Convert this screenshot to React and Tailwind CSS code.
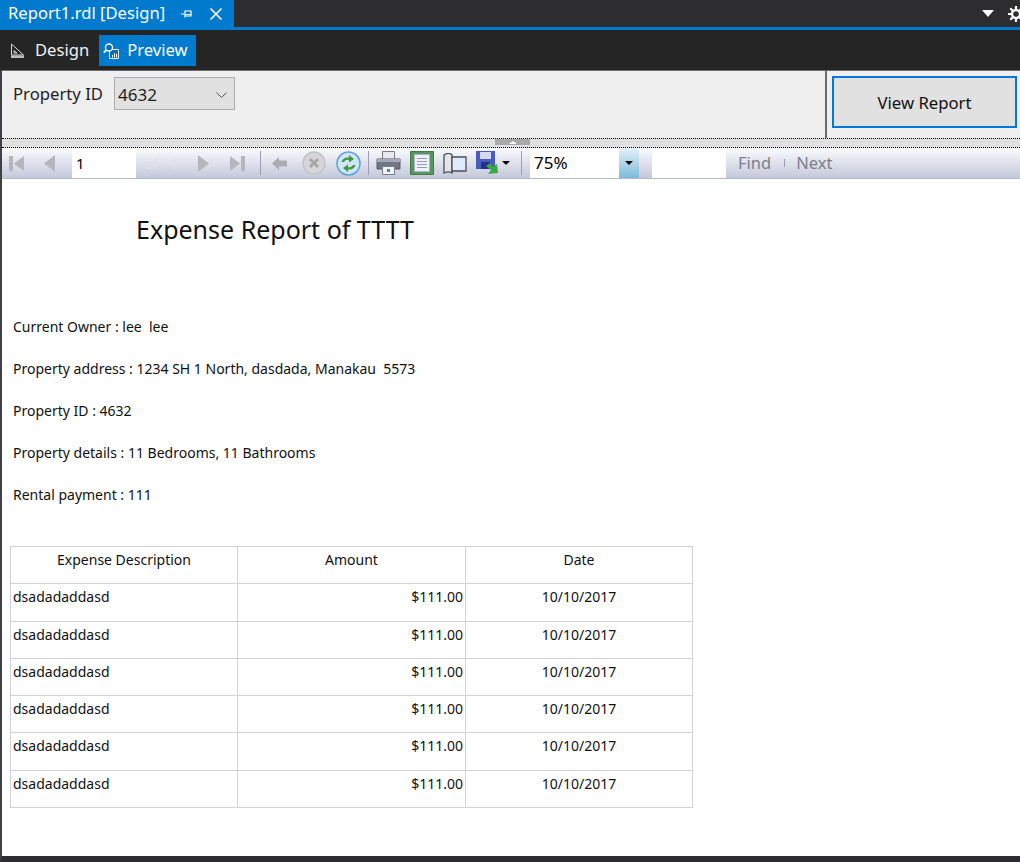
const font = "[font-family:'Noto_Sans',sans-serif]"

const rows = Array.from({ length: 6 }, () => ({
  description: 'dsadadaddasd',
  amount: '$111.00',
  date: '10/10/2017',
}))

const details = [
  'Current Owner : lee  lee',
  'Property address : 1234 SH 1 North, dasdada, Manakau  5573',
  'Property ID : 4632',
  'Property details : 11 Bedrooms, 11 Bathrooms',
  'Rental payment : 111',
]

const PinIcon = () => (
  <svg width="12" height="10" viewBox="0 0 12 10" className="shrink-0">
    <path d="M0 5h4M4 1.500v7M4 2h6v5H4M5 5.500h5" stroke="#fff" strokeWidth="1.200" fill="none" />
  </svg>
)

const CloseIcon = () => (
  <svg width="14" height="14" viewBox="0 0 14 14" className="shrink-0">
    <path d="M1.500 1.500l11 11M12.500 1.500l-11 11" stroke="#fff" strokeWidth="1.600" />
  </svg>
)

const GearIcon = () => (
  <svg width="16" height="16" viewBox="0 0 16 16" className="shrink-0">
    <circle cx="8" cy="8" r="4" fill="none" stroke="#fff" strokeWidth="2.400" />
    <path d="M8 0v3M8 13v3M0 8h3M13 8h3M2.300 2.300l2.200 2.200M11.500 11.500l2.200 2.200M13.700 2.300l-2.200 2.200M4.500 11.500l-2.200 2.200" stroke="#fff" strokeWidth="2.200" />
  </svg>
)

const RulerIcon = () => (
  <svg width="15" height="16" viewBox="0 0 15 16">
    <path d="M1.500 1v11h12L1.500 1z" fill="none" stroke="#d8d8d8" />
    <path d="M4 7.500v2.500h3z" fill="none" stroke="#d8d8d8" />
    <path d="M1 12.500h13v2.500H1z" fill="#bdbdbd" />
  </svg>
)

const PreviewIcon = () => (
  <svg width="16" height="16" viewBox="0 0 16 16">
    <path d="M6.500 6.500h9v9h-9z" fill="#0a6db5" stroke="#e8e8e8" />
    <path d="M9.500 12v2.500M11.500 10v4.500M13.500 11v3.500" stroke="#fff" />
    <circle cx="6" cy="4.500" r="3.500" fill="#0a6db5" stroke="#fff" strokeWidth="1.300" />
    <path d="M3.500 7L.8 9.700" stroke="#fff" strokeWidth="1.800" />
  </svg>
)

const FirstIcon = () => (
  <svg width="16" height="17" viewBox="0 0 16 17">
    <path d="M0 1h4v15H0zM15 1v15L5 8.500z" fill="#b4b6bd" />
  </svg>
)

const PrevIcon = () => (
  <svg width="11" height="17" viewBox="0 0 11 17">
    <path d="M11 0v17L0 8.500z" fill="#b4b6bd" />
  </svg>
)

const NextIcon = () => (
  <svg width="11" height="17" viewBox="0 0 11 17">
    <path d="M0 0v17l11-8.500z" fill="#b4b6bd" />
  </svg>
)

const LastIcon = () => (
  <svg width="16" height="17" viewBox="0 0 16 17">
    <path d="M12 1h4v15h-4zM1 1v15l10-7.500z" fill="#b4b6bd" />
  </svg>
)

const BackIcon = () => (
  <svg width="15" height="13" viewBox="0 0 15 13">
    <path d="M7 0v3.500h8v6H7V13L0 6.500z" fill="#a9acb3" />
  </svg>
)

const StopIcon = () => (
  <svg width="24" height="24" viewBox="0 0 24 24">
    <circle cx="12" cy="12" r="11" fill="#d5d6da" stroke="#c2c3c9" strokeWidth="1.500" />
    <path d="M8 8l8 8M16 8l-8 8" stroke="#a5a6ac" strokeWidth="3" />
  </svg>
)

const RefreshIcon = () => (
  <svg width="25" height="25" viewBox="0 0 25 25">
    <circle cx="12.500" cy="12.500" r="11.500" fill="#cfe6fa" stroke="#5b9fe0" strokeWidth="1.500" />
    <path d="M5.500 11c1-3.500 4-5 7.500-4.500V4l5 4-5 3.500V9c-2-.5-4 0-5 2z" fill="#3f9a35" />
    <path d="M19.500 14c-1 3.500-4 5-7.500 4.500V21l-5-4 5-3.500V16c2 .5 4 0 5-2z" fill="#3f9a35" />
  </svg>
)

const PrintIcon = () => (
  <svg width="25" height="24" viewBox="0 0 25 24">
    <path d="M6.500.500h12v8h-12z" fill="#e8e8ee" stroke="#777c88" />
    <path d="M1 8h23v10H1z" fill="#6f7686" stroke="#555a66" />
    <path d="M1 8h23v3H1z" fill="#a4a9b5" />
    <path d="M6.500 15.500h12v8h-12z" fill="#f2f4f8" stroke="#777c88" />
    <path d="M11 18h3v3h-3z" fill="#3f86c8" />
  </svg>
)

const LayoutIcon = () => (
  <svg width="24" height="24" viewBox="0 0 24 24">
    <path d="M.5.500h23v23H.5z" fill="#5c9460" stroke="#3f7a48" />
    <path d="M4.500 3.500h15v17h-15z" fill="#eef2f8" stroke="#a9b5c7" />
    <path d="M7 7.500h10M7 10.500h10M7 13.500h10M7 16.500h10" stroke="#8f9db5" />
  </svg>
)

const PageSetupIcon = () => (
  <svg width="24" height="21" viewBox="0 0 24 21">
    <path d="M1 2c3-2 6-2 8 0v18c-2-1.500-5-1.500-8 0z" fill="#e3e5ea" stroke="#4a4e58" strokeWidth="1.300" />
    <path d="M9 4h14v14H9z" fill="#dfe9f8" stroke="#4a4e58" strokeWidth="1.300" />
  </svg>
)

const SaveIcon = () => (
  <svg width="24" height="24" viewBox="0 0 24 24">
    <path d="M0 0h19v18H0z" fill="#4a5cc0" />
    <path d="M4 1h11v7H4z" fill="#d5daf0" />
    <path d="M5 11h9v7H5z" fill="#26338a" />
    <path d="M10 15l4-3 3 4 4-3 1 9-10 1 3-4z" fill="#3aa845" />
  </svg>
)

const ToolDivider = () => <div className="h-6 w-px bg-[#9a9eb0] shrink-0" />

function TitleBar() {
  return (
    <div className="flex h-[30px] bg-[#2d2d30] border-b-[3px] border-[#007acc]">
      <div className="flex h-[27px] w-[234px] items-center bg-[#007acc] pl-[8px] text-white text-[16.6px]">
        <span>Report1.rdl [Design]</span>
        <div className="ml-[16px] mr-[16px]"><PinIcon /></div>
        <CloseIcon />
      </div>
      <div className="ml-auto flex h-[27px] items-center gap-[14px] -mr-[4px]">
        <div className="h-0 w-0 border-x-[6px] border-t-[7px] border-x-transparent border-t-white" />
        <GearIcon />
      </div>
    </div>
  )
}

function ViewBar() {
  return (
    <div className="flex h-[40px] items-center bg-[#252526] pl-[10px] pt-[1px] text-[16.6px] text-[#f1f1f1]">
      <RulerIcon />
      <span className="ml-[10px]">Design</span>
      <div className="ml-[10px] flex h-[31px] w-[97px] items-center bg-[#007acc] pl-[4px] text-white">
        <PreviewIcon />
        <span className="ml-[8px]">Preview</span>
      </div>
    </div>
  )
}

function ParamsPanel() {
  return (
    <div className="flex h-[68px] border-t border-[#6b6b6b] bg-[#efefef] text-[16.700px] text-[#1e1e1e]">
      <div className="flex flex-1 items-start pl-[11px] pt-[6px]">
        <span className="mt-[4px]">Property ID</span>
        <div className="ml-[11px] flex h-[33px] w-[121px] items-center justify-between border border-[#adadad] bg-[#e1e1e1] pl-[3px] pr-[7px] pt-[2px] text-[17px]">
          <span>4632</span>
          <svg width="11" height="6" viewBox="0 0 11 6">
            <path d="M.5.500l5 5 5-5" fill="none" stroke="#555" />
          </svg>
        </div>
      </div>
      <div className="flex w-[195px] shrink-0 border-l-2 border-[#6b6b6b] pl-[5px] pt-[5px]">
        <div className="flex h-[52px] w-[185px] items-center justify-center border-2 border-[#0078d7] bg-[#e1e1e1] pt-[1px] text-[#111]">
          View Report
        </div>
      </div>
    </div>
  )
}

function Splitter() {
  return (
    <div className="relative h-[10px] border-y border-dotted border-black bg-[#e0e0e0]">
      <div className="absolute left-[493px] top-0 flex h-[6px] w-[35px] items-center justify-center bg-[#a9a9a9]">
        <div className="h-0 w-0 border-x-[4px] border-b-[3px] border-x-transparent border-b-white" />
      </div>
    </div>
  )
}

function ReportToolbar() {
  return (
    <div className="flex h-[31px] items-center bg-gradient-to-b from-[#fafbfd] to-[#c4c9da] border-b border-[#b5b9c9] text-[16.500px]">
      <div className="ml-[7px]"><FirstIcon /></div>
      <div className="ml-[19px]"><PrevIcon /></div>
      <div className="ml-[17px] flex h-[30px] w-[64px] items-center self-start bg-white pl-[4px] text-[15px] text-black">1</div>
      <span className="ml-[8px] w-[52px] whitespace-pre text-[15px] text-[#dde0ea]">of   1</span>
      <div className="ml-[2px]"><NextIcon /></div>
      <div className="ml-[20px]"><LastIcon /></div>
      <div className="ml-[15px]"><ToolDivider /></div>
      <div className="ml-[11px]"><BackIcon /></div>
      <div className="ml-[15px]"><StopIcon /></div>
      <div className="ml-[10px]"><RefreshIcon /></div>
      <div className="ml-[7px]"><ToolDivider /></div>
      <div className="ml-[7px]"><PrintIcon /></div>
      <div className="ml-[9px]"><LayoutIcon /></div>
      <div className="ml-[9px]"><PageSetupIcon /></div>
      <div className="ml-[9px]"><SaveIcon /></div>
      <div className="ml-[2px] h-0 w-0 border-x-[4px] border-t-[4px] border-x-transparent border-t-black" />
      <div className="ml-[11px]"><ToolDivider /></div>
      <div className="ml-[8px] flex h-[30px] w-[89px] items-center self-start bg-white pl-[4px] text-[17px] text-black">75%</div>
      <div className="flex h-[30px] w-[20px] items-center justify-center self-start bg-gradient-to-b from-[#e4f1f8] to-[#7db9dc]">
        <div className="h-0 w-0 border-x-[4px] border-t-[4px] border-x-transparent border-t-black" />
      </div>
      <div className="ml-[13px] h-[30px] w-[74px] self-start bg-white" />
      <span className="ml-[12px] text-[#7c7f8a]">Find</span>
      <div className="ml-[13px] h-[8px] w-px bg-[#9a9eb0]" />
      <span className="ml-[11px] text-[#7c7f8a]">Next</span>
    </div>
  )
}

function ExpenseTable() {
  const cell = 'border border-[#d3d3d3] align-top text-[14px] h-[37.300px] px-[2px] pt-[2px] pb-0 font-normal'
  return (
    <table className="ml-[8px] mt-[41px] w-[682px] table-fixed border-collapse text-[#111]">
      <thead>
        <tr>
          <th className={`${cell} w-[227px] text-center`}>Expense Description</th>
          <th className={`${cell} w-[228px] text-center`}>Amount</th>
          <th className={`${cell} w-[227px] text-center`}>Date</th>
        </tr>
      </thead>
      <tbody>
        {rows.map((row, i) => (
          <tr key={i}>
            <td className={cell}>{row.description}</td>
            <td className={`${cell} text-right`}>{row.amount}</td>
            <td className={`${cell} text-center text-[14.500px]`}>{row.date}</td>
          </tr>
        ))}
      </tbody>
    </table>
  )
}

function Report() {
  return (
    <div className="flex-1 bg-white">
      <h1 className="ml-[134px] mt-[31px] h-[38px] text-[25px] leading-[38px] text-[#111] font-normal">Expense Report of TTTT</h1>
      <div className="mt-[69px] ml-[11px] flex flex-col gap-[22px] text-[14px] text-[#111]">
        {details.map((line) => (
          <p key={line} className="h-[20px] leading-[20px] whitespace-pre">{line}</p>
        ))}
      </div>
      <ExpenseTable />
    </div>
  )
}

export default function App() {
  return (
    <div className={`flex h-[862px] w-[1020px] flex-col overflow-hidden bg-[#2d2d30] ${font}`}>
      <TitleBar />
      <ViewBar />
      <div className="flex flex-1 flex-col border-l-2 border-[#3f3f46] border-b-[6px] border-b-[#2d2d30]">
        <ParamsPanel />
        <Splitter />
        <ReportToolbar />
        <Report />
      </div>
    </div>
  )
}
